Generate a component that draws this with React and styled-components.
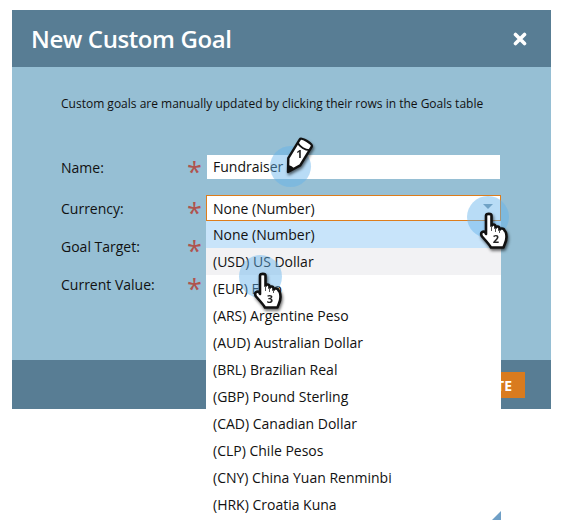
import React from "react";
import styled, { createGlobalStyle } from "styled-components";

const Global = createGlobalStyle`
  html, body { margin: 0; padding: 0; background: #fff; height: 530px; overflow: hidden; }
  body { font-family: "Open Sans", "Liberation Sans", sans-serif; color: #111; }
`;

const Page = styled.div`
  width: 572px;
  height: 530px;
  padding: 10px 0 0 12px;
  box-sizing: border-box;
`;
const Modal = styled.section`
  position: relative;
  width: 539px;
`;
const Header = styled.header`
  height: 57px;
  background: #587d94;
  display: flex;
  align-items: center;
  justify-content: space-between;
  padding: 0 24px 0 19px;
`;
const Title = styled.h1`
  margin: 0;
  color: #fff;
  font-size: 24px;
  font-weight: 600;
  letter-spacing: -0.4px;
`;
const Body = styled.div`
  height: 293px;
  background: #96bfd4;
  box-sizing: border-box;
  padding: 28px 51px 0 49px;
`;
const Intro = styled.p`
  margin: 0 0 43px;
  font-size: 12px;
  line-height: 17px;
`;
const Form = styled.div`
  display: flex;
  flex-direction: column;
`;
const Row = styled.div`
  display: grid;
  grid-template-columns: 126px 19px 1fr;
  align-items: center;
  height: ${(p) => p.$h}px;
  margin-bottom: ${(p) => p.$gap}px;
  font-size: 14px;
`;
const Label = styled.span``;
const Star = styled.span`
  color: #b0534e;
  font-size: 27px;
  line-height: 20px;
  height: 20px;
  padding-top: 5px;
  box-sizing: border-box;
`;
const Input = styled.div`
  background: #fff;
  height: 24px;
  line-height: 24px;
  padding-left: 6px;
  margin-left: 1px;
  font-size: 14px;
`;
const SelectWrap = styled.div`
  position: relative;
`;
const Select = styled.div`
  height: 26px;
  box-sizing: border-box;
  background: #fff;
  border: 1px solid #dd7d1c;
  padding: 0 7px 0 6px;
  display: flex;
  align-items: center;
  justify-content: space-between;
  width: 295px;
`;
const Caret = styled.i`
  width: 0;
  height: 0;
  border-left: 5px solid transparent;
  border-right: 5px solid transparent;
  border-top: 5px solid #7f98a8;
  margin-top: -3px;
`;
const Dropdown = styled.ul`
  position: absolute;
  top: 26px;
  left: 0;
  width: 295px;
  height: 299px;
  margin: 0;
  padding: 0;
  list-style: none;
  background: #fff;
  overflow: hidden;
  z-index: 2;
`;
const Option = styled.li`
  height: 27px;
  line-height: 27px;
  padding-left: 7px;
  font-size: 14px;
  background: ${(p) => (p.$state === "selected" ? "#c8e4fa" : p.$state === "hover" ? "#f2f2f4" : "transparent")};
`;
const Grip = styled.b`
  position: absolute;
  right: 0;
  bottom: 0;
  width: 0;
  height: 0;
  border-left: 9px solid transparent;
  border-bottom: 9px solid #6f9fc6;
`;
const Footer = styled.footer`
  height: 49px;
  background: #587d94;
  display: flex;
  justify-content: flex-end;
  align-items: flex-start;
  padding: 12px 26px 0 0;
  box-sizing: border-box;
`;
const Create = styled.button`
  height: 26px;
  border: 0;
  padding: 0 13px 0 17px;
  background: #d97b1f;
  color: #fff;
  font: 700 14px "Open Sans", sans-serif;
`;
const Hotspot = styled.div`
  position: absolute;
  left: ${(p) => p.$x - p.$r}px;
  top: ${(p) => p.$y - p.$r}px;
  width: ${(p) => p.$r * 2}px;
  height: ${(p) => p.$r * 2}px;
  border-radius: 50%;
  background: rgba(98, 178, 235, 0.45);
  z-index: 3;
`;
const Cursor = styled.svg`
  position: absolute;
  left: ${(p) => p.$x}px;
  top: ${(p) => p.$y}px;
  z-index: 4;
  overflow: visible;
  filter: drop-shadow(1px 2px 1.5px rgba(0, 0, 0, 0.6));
`;
const Num = styled.text`
  font: 700 11px "Open Sans", sans-serif;
  fill: #222;
  text-anchor: middle;
`;

const currencies = [
  "None (Number)", "(USD) US Dollar", "(EUR) Euro", "(ARS) Argentine Peso", "(AUD) Australian Dollar",
  "(BRL) Brazilian Real", "(GBP) Pound Sterling", "(CAD) Canadian Dollar", "(CLP) Chile Pesos",
  "(CNY) China Yuan Renminbi", "(HRK) Croatia Kuna",
];

const Close = () => (
  <svg width="14" height="14" viewBox="0 0 14 14">
    <path d="M2.5 2.5l9 9M11.5 2.5l-9 9" stroke="#fff" strokeWidth="3.6" strokeLinecap="round" />
  </svg>
);

const Hand = ({ x, y, n }) => (
  <Cursor $x={x} $y={y} width="28" height="36" viewBox="0 0 28 36">
    <path
      d="M6 2.5C6 .3 11.5 .3 11.5 2.5V13C11.5 11 15.5 11 15.5 13.5V15C15.5 13 19.5 13 19.5 15.5V17C19.5 15 24 15 24.5 17.5C26.5 19 26.5 22 26.5 24C26.5 29 24.5 31 23.5 34.5H11C9 31 6 28 2 23.5C0 20.5 2 17.5 5 19L6 21Z"
      fill="#fff"
      stroke="#111"
      strokeWidth="2.6"
      strokeLinejoin="round"
    />
    <path d="M11.5 13V18M15.5 15V19M19.5 17V20" fill="none" stroke="#555" strokeWidth="1" />
    <Num x="16" y="30">{n}</Num>
  </Cursor>
);

const Pencil = ({ x, y, n }) => (
  <Cursor $x={x} $y={y} width="34" height="40" viewBox="0 0 34 40">
    <g transform="rotate(31.5 6 38)">
      <path d="M-1 26V4C-1 1 13 1 13 4V26L6 38Z" fill="#fff" stroke="#111" strokeWidth="2.4" strokeLinejoin="round" />
      <path d="M-1 8C3 10.5 9 10.5 13 8" fill="none" stroke="#111" strokeWidth="1.8" />
      <path d="M2.2 32L6 38L9.8 32C7.5 30.8 4.5 30.8 2.2 32Z" fill="#111" />
    </g>
    <Num x="17.5" y="24">{n}</Num>
  </Cursor>
);

export default function App() {
  return (
    <Page>
      <Global />
      <Modal>
        <Header>
          <Title>New Custom Goal</Title>
          <Close />
        </Header>
        <Body>
          <Intro>Custom goals are manually updated by clicking their rows in the Goals table</Intro>
          <Form>
            <Row $h={24} $gap={16}>
              <Label>Name:</Label>
              <Star>*</Star>
              <Input>Fundraiser</Input>
            </Row>
            <Row $h={26} $gap={12}>
              <Label>Currency:</Label>
              <Star>*</Star>
              <SelectWrap>
                <Select>
                  None (Number)
                  <Caret />
                </Select>
                <Dropdown>
                  {currencies.map((c, i) => (
                    <Option key={c} $state={i === 0 ? "selected" : i === 1 ? "hover" : ""}>{c}</Option>
                  ))}
                  <Grip />
                </Dropdown>
              </SelectWrap>
            </Row>
            <Row $h={26} $gap={12}>
              <Label>Goal Target:</Label>
              <Star>*</Star>
              <Input />
            </Row>
            <Row $h={26} $gap={0}>
              <Label>Current Value:</Label>
              <Star>*</Star>
              <Input />
            </Row>
          </Form>
        </Body>
        <Footer>
          <Create>CREATE</Create>
        </Footer>
        <Hotspot $x={278} $y={156} $r={20.5} />
        <Hotspot $x={476} $y={207} $r={21} />
        <Hotspot $x={248.5} $y={266.5} $r={21.5} />
        <Pencil x={270} y={124} n="1" />
        <Hand x={468} y={203} n="2" />
        <Hand x={242} y={263} n="3" />
      </Modal>
    </Page>
  );
}
